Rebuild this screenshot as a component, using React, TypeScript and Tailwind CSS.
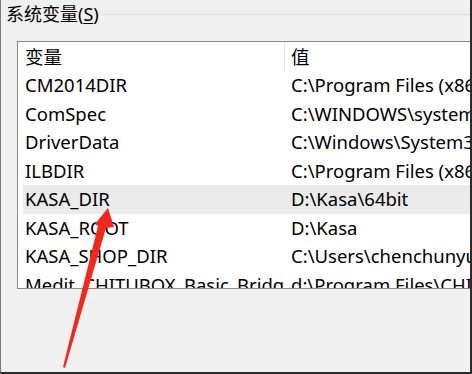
const rows = [
  { name: 'CM2014DIR', value: 'C:\\Program Files (x86)\\CM2014\\' },
  { name: 'ComSpec', value: 'C:\\WINDOWS\\system32\\cmd.exe' },
  { name: 'DriverData', value: 'C:\\Windows\\System32\\Drivers\\DriverData' },
  { name: 'ILBDIR', value: 'C:\\Program Files (x86)\\ILB\\' },
  { name: 'KASA_DIR', value: 'D:\\Kasa\\64bit', selected: true },
  { name: 'KASA_ROOT', value: 'D:\\Kasa' },
  { name: 'KASA_SHOP_DIR', value: 'C:\\Users\\chenchunyu\\Documents' },
  { name: 'Medit_CHITUBOX_Basic_Bridge', value: 'd:\\Program Files\\CHITUBOX' },
];

function Arrow() {
  return (
    <svg
      className="absolute left-0 top-0 pointer-events-none"
      width="472"
      height="374"
      viewBox="0 0 472 374"
    >
      <polygon
        points="107,208 113,227 105,228 64,368 62,367 97,226 94,224"
        fill="#f4271c"
      />
    </svg>
  );
}

export default function App() {
  return (
    <div className="relative w-[472px] h-[374px] overflow-hidden bg-[#f0f0f0] border-l border-l-[#7a7a7a] border-r-2 border-r-[#2b2b2b] border-b-2 border-b-[#2b2b2b] font-['Noto_Sans','Noto_Sans_CJK_SC',sans-serif] text-[18.5px] text-black">
      {/* group title */}
      <div className="flex items-center h-[28px] text-[18px]">
        <span className="pl-[5px] pr-[4px] leading-[28px] whitespace-nowrap">
          系统变量(<span className="underline underline-offset-2">S</span>)
        </span>
        <div className="flex-1 h-px bg-[#dcdcdc]" />
      </div>

      {/* list */}
      <div className="ml-[16px] mt-[13px] w-[470px] h-[248px] bg-white border border-[#8a8a8a] overflow-hidden">
        <div className="flex h-[29px] items-center ml-[5px]">
          <div className="w-[261px] shrink-0 pl-[2px]">变量</div>
          <div className="w-px h-full shrink-0 bg-[#e5e5e5]" />
          <div className="pl-[6px]">值</div>
        </div>
        {rows.map((row) => (
          <div
            key={row.name}
            className={`flex h-[28.5px] items-center ml-[5px] ${row.selected ? 'bg-[#ebebeb]' : ''}`}
          >
            <div className="w-[261px] shrink-0 pl-[2px] overflow-hidden whitespace-nowrap">{row.name}</div>
            <div className="pl-[7px] overflow-hidden whitespace-nowrap">{row.value}</div>
          </div>
        ))}
      </div>

      <Arrow />
    </div>
  );
}
